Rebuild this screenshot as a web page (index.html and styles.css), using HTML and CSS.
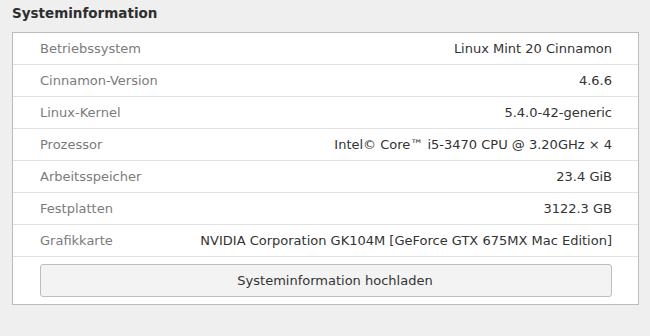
FILE: index.html
```html
<!DOCTYPE html>
<html lang="de">
<head>
    <meta charset="UTF-8">
    <title>Systeminformation</title>

    <link rel="stylesheet" href="styles.css">
</head>
<body>
<div class="page">
    <h1 class="title">Systeminformation</h1>

    <div class="panel">
        <div class="row">
            <span class="label">Betriebssystem</span>
            <span class="value">Linux Mint 20 Cinnamon</span>
        </div>
        <div class="row">
            <span class="label">Cinnamon-Version</span>
            <span class="value">4.6.6</span>
        </div>
        <div class="row">
            <span class="label">Linux-Kernel</span>
            <span class="value">5.4.0-42-generic</span>
        </div>
        <div class="row">
            <span class="label">Prozessor</span>
            <span class="value">Intel© Core™ i5-3470 CPU @ 3.20GHz × 4</span>
        </div>
        <div class="row">
            <span class="label">Arbeitsspeicher</span>
            <span class="value">23.4 GiB</span>
        </div>
        <div class="row">
            <span class="label">Festplatten</span>
            <span class="value">3122.3 GB</span>
        </div>
        <div class="row">
            <span class="label">Grafikkarte</span>
            <span class="value">NVIDIA Corporation GK104M [GeForce GTX 675MX Mac Edition]</span>
        </div>
        <div class="actions">
            <button type="button">Systeminformation hochladen</button>
        </div>
    </div>
</div>
</body>
</html>
```

FILE: styles.css
```css
html, body {
    margin: 0;
    padding: 0;
    background-color: #efefef;
}

body {
    font-family: "DejaVu Sans", sans-serif;
    font-size: 13px;
    color: #333;
}

.page {
    padding: 0 11px 0 12px;
}

.title {
    margin: 0;
    height: 32px;
    padding-top: 5px;
    box-sizing: border-box;
    font-size: 13.5px;
    font-weight: bold;
    color: #2e2e2e;
}

.panel {
    background-color: #fff;
    border: 1px solid #bcbcbc;
}

.row {
    display: flex;
    justify-content: space-between;
    align-items: center;
    height: 31px;
    padding: 0 26px 0 27px;
    border-bottom: 1px solid #e2e2e2;
}

.label {
    color: #7b7b7b;
}

.value {
    color: #333;
}

.actions {
    padding: 7px 26px 7px 27px;
}

button {
    display: block;
    width: 100%;
    height: 33px;
    padding: 0 0 0 18px;
    font-family: inherit;
    font-size: 13px;
    color: #333;
    background-color: #f3f3f3;
    border: 1px solid #bdbdbd;
    border-radius: 3px;
}
```
